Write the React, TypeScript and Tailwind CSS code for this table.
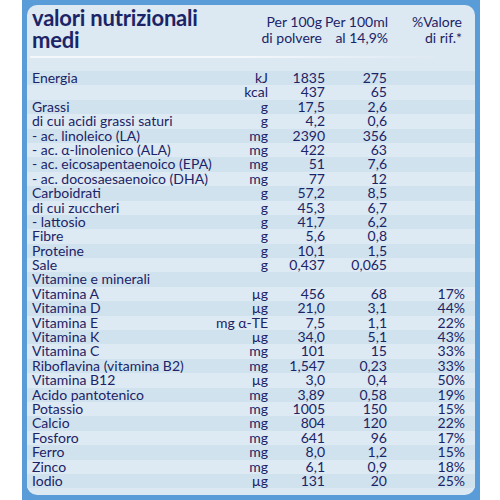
import React from "react";

type Row = { label: string; unit?: string; a?: string; b?: string; pct?: string };

const rows: Row[] = [
  { label: "Energia", unit: "kJ", a: "1835", b: "275" },
  { label: "", unit: "kcal", a: "437", b: "65" },
  { label: "Grassi", unit: "g", a: "17,5", b: "2,6" },
  { label: "di cui acidi grassi saturi", unit: "g", a: "4,2", b: "0,6" },
  { label: "- ac. linoleico (LA)", unit: "mg", a: "2390", b: "356" },
  { label: "- ac. α-linolenico (ALA)", unit: "mg", a: "422", b: "63" },
  { label: "- ac. eicosapentaenoico (EPA)", unit: "mg", a: "51", b: "7,6" },
  { label: "- ac. docosaesaenoico (DHA)", unit: "mg", a: "77", b: "12" },
  { label: "Carboidrati", unit: "g", a: "57,2", b: "8,5" },
  { label: "di cui zuccheri", unit: "g", a: "45,3", b: "6,7" },
  { label: "- lattosio", unit: "g", a: "41,7", b: "6,2" },
  { label: "Fibre", unit: "g", a: "5,6", b: "0,8" },
  { label: "Proteine", unit: "g", a: "10,1", b: "1,5" },
  { label: "Sale", unit: "g", a: "0,437", b: "0,065" },
  { label: "Vitamine e minerali" },
  { label: "Vitamina A", unit: "µg", a: "456", b: "68", pct: "17%" },
  { label: "Vitamina D", unit: "µg", a: "21,0", b: "3,1", pct: "44%" },
  { label: "Vitamina E", unit: "mg α-TE", a: "7,5", b: "1,1", pct: "22%" },
  { label: "Vitamina K", unit: "µg", a: "34,0", b: "5,1", pct: "43%" },
  { label: "Vitamina C", unit: "mg", a: "101", b: "15", pct: "33%" },
  { label: "Riboflavina (vitamina B2)", unit: "mg", a: "1,547", b: "0,23", pct: "33%" },
  { label: "Vitamina B12", unit: "µg", a: "3,0", b: "0,4", pct: "50%" },
  { label: "Acido pantotenico", unit: "mg", a: "3,89", b: "0,58", pct: "19%" },
  { label: "Potassio", unit: "mg", a: "1005", b: "150", pct: "15%" },
  { label: "Calcio", unit: "mg", a: "804", b: "120", pct: "22%" },
  { label: "Fosforo", unit: "mg", a: "641", b: "96", pct: "17%" },
  { label: "Ferro", unit: "mg", a: "8,0", b: "1,2", pct: "15%" },
  { label: "Zinco", unit: "mg", a: "6,1", b: "0,9", pct: "18%" },
  { label: "Iodio", unit: "µg", a: "131", b: "20", pct: "25%" },
];

export default function App() {
  return (
    <div className="w-[500px] h-[500px] bg-white overflow-hidden" style={{ fontFamily: "Lato, 'Open Sans', sans-serif" }}>
      <div className="ml-[22px] w-[458px] h-[500px] bg-[#5a9cd8] p-[5px]">
        <div className="h-full rounded-[10px] bg-[#dce8f2] text-[#1b2466] flex flex-col">
          {/* header */}
          <div className="flex pl-[5px] pt-[2px]">
            <div className="w-[202px] text-[22px] leading-[22px] font-bold tracking-[-0.2px] whitespace-nowrap">
              valori nutrizionali
              <br />
              medi
            </div>
            <div className="w-[88px] text-right text-[14px] leading-[16px] pt-[7px] whitespace-nowrap">
              Per 100g
              <br />
              di polvere
            </div>
            <div className="w-[66px] text-right text-[14px] leading-[16px] pt-[7px] whitespace-nowrap">
              Per 100ml
              <br />
              al 14,9%
            </div>
            <div className="w-[74px] text-right text-[14px] leading-[16px] pt-[7px] whitespace-nowrap">
              %Valore
              <br />
              di rif.*
            </div>
          </div>
          <div className="mt-[5px] mx-[3px] w-[420px] h-[2px] bg-gradient-to-r from-white/70 via-white/70 to-white/0" />

          {/* table */}
          <div className="mt-[13px] text-[14px]">
            {rows.map((r, i) => (
              <div
                key={i}
                className={
                  "grid grid-cols-[156px_80px_57px_62px_78px] pl-[5px] h-[14.4px] leading-[14.4px] " +
                  (i % 2 === 0 ? "bg-[#d1e2ef]" : "bg-[#dde9f3]")
                }
              >
                <div className="whitespace-nowrap">{r.label}</div>
                <div className="text-right whitespace-nowrap">{r.unit}</div>
                <div className="text-right">{r.a}</div>
                <div className="text-right">{r.b}</div>
                <div className="text-right">{r.pct}</div>
              </div>
            ))}
          </div>
        </div>
      </div>
    </div>
  );
}
